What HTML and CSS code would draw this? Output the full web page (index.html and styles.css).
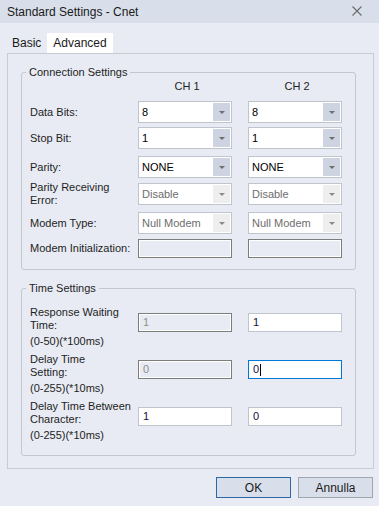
FILE: index.html
```html
<!DOCTYPE html>
<html lang="en">
<head>
  <meta charset="UTF-8" />
  <title>Standard Settings - Cnet</title>
  <link rel="stylesheet" href="styles.css">
</head>
<body>

  <div class="titlebar">
    <span class="title">Standard Settings - Cnet</span>
    <svg class="close" width="10" height="10" viewBox="0 0 10 10">
      <path d="M0.5 0.5 L9.5 9.5 M9.5 0.5 L0.5 9.5" stroke="#6a6a6a" stroke-width="1.1" fill="none"/>
    </svg>
  </div>

  <div class="tabs">
    <div class="tab">Basic</div>
    <div class="tab active">Advanced</div>
  </div>

  <div class="panel">
    <!-- Connection Settings -->
    <div class="group conn">
      <span class="legend">Connection Settings</span>
      <div class="row head">
        <span></span>
        <span class="ch">CH 1</span>
        <span class="ch">CH 2</span>
      </div>
      <div class="row r-data">
        <label>Data Bits:</label>
        <div class="combo"><span>8</span><i class="btn"><b></b></i></div>
        <div class="combo"><span>8</span><i class="btn"><b></b></i></div>
      </div>
      <div class="row r-stop">
        <label>Stop Bit:</label>
        <div class="combo"><span>1</span><i class="btn"><b></b></i></div>
        <div class="combo"><span>1</span><i class="btn"><b></b></i></div>
      </div>
      <div class="row r-parity">
        <label>Parity:</label>
        <div class="combo"><span>NONE</span><i class="btn"><b></b></i></div>
        <div class="combo"><span>NONE</span><i class="btn"><b></b></i></div>
      </div>
      <div class="row r-pre">
        <label>Parity Receiving<br>Error:</label>
        <div class="combo disabled"><span>Disable</span><i class="btn"><b></b></i></div>
        <div class="combo disabled"><span>Disable</span><i class="btn"><b></b></i></div>
      </div>
      <div class="row r-modem">
        <label>Modem Type:</label>
        <div class="combo disabled"><span>Null Modem</span><i class="btn"><b></b></i></div>
        <div class="combo disabled"><span>Null Modem</span><i class="btn"><b></b></i></div>
      </div>
      <div class="row r-init">
        <label>Modem Initialization:</label>
        <div class="textbox disabled"></div>
        <div class="textbox disabled"></div>
      </div>
    </div>

    <!-- Time Settings -->
    <div class="group time">
      <span class="legend">Time Settings</span>
      <div class="tblock">
        <div class="row trow">
          <label>Response Waiting<br>Time:</label>
          <div class="textbox disabled">1</div>
          <div class="textbox">1</div>
        </div>
        <div class="range">(0-50)(*100ms)</div>
      </div>
      <div class="tblock">
        <div class="row trow">
          <label>Delay Time<br>Setting:</label>
          <div class="textbox disabled">0</div>
          <div class="textbox focus">0<span class="caret"></span></div>
        </div>
        <div class="range">(0-255)(*10ms)</div>
      </div>
      <div class="tblock last">
        <div class="row trow">
          <label>Delay Time Between<br>Character:</label>
          <div class="textbox">1</div>
          <div class="textbox">0</div>
        </div>
        <div class="range">(0-255)(*10ms)</div>
      </div>
    </div>
  </div>

  <div class="buttons">
    <button class="ok">OK</button>
    <button>Annulla</button>
  </div>

</body>
</html>
```

FILE: styles.css
```css
* { margin: 0; padding: 0; box-sizing: border-box; font-family: 'Liberation Sans', Arial, sans-serif; }
body { width: 379px; height: 506px; background-color: #e8ebf3; color: #1e1e1e; font-size: 11px; overflow: hidden; }

.titlebar {
  height: 23px;
  background-color: #d9dfea;
  display: flex;
  align-items: center;
  justify-content: space-between;
  padding: 0 17px 0 7px;
}
.title { font-size: 12px; color: #1a1a1a; }
.close { margin-top: -2px; }

.tabs { display: flex; margin-top: 10px; padding-left: 6px; height: 20px; }
.tab { padding: 3px 6px 0 6px; font-size: 12px; color: #1a1a1a; }
.tab.active { background-color: #ffffff; }

.panel {
  margin-left: 7px;
  width: 367px;
  height: 416px;
  border: 1px solid #c7cbd4;
  padding: 18px 0 0 13px;
}

.group {
  position: relative;
  width: 335px;
  border: 1px solid #c3c7d0;
  border-radius: 3px;
  padding: 0 12px 0 8px;
}
.legend {
  position: absolute;
  top: -8px;
  left: 4px;
  padding: 0 3px;
  background-color: #e8ebf3;
  line-height: 14px;
  font-size: 11px;
}
.conn { padding-top: 6px; padding-bottom: 11px; }
.time { margin-top: 18px; padding-top: 17px; padding-bottom: 13px; }

.row {
  display: grid;
  grid-template-columns: 92px 94px 94px;
  column-gap: 16px;
  align-items: center;
}
.row label { line-height: 13px; white-space: nowrap; }
.head { height: 14px; }
.ch { text-align: center; line-height: 14px; padding-left: 4px; }
.r-data { margin-top: 8px; }
.r-stop { margin-top: 4px; }
.r-parity { margin-top: 7px; }
.r-pre { margin-top: 3px; height: 26px; }
.r-modem { margin-top: 5px; }
.r-init { margin-top: 5px; }

.combo {
  height: 22px;
  background-color: #ffffff;
  border: 1px solid #c0c4cc;
  display: flex;
  align-items: center;
  justify-content: space-between;
  padding-left: 3px;
  color: #000000;
}
.combo .btn {
  width: 17px;
  height: 18px;
  margin-right: 1px;
  background-color: #cdd3e1;
  display: flex;
  align-items: center;
  justify-content: center;
}
.combo .btn b {
  width: 0;
  height: 0;
  border-left: 3px solid transparent;
  border-right: 3px solid transparent;
  border-top: 3px solid #6e6e6e;
}
.combo.disabled { color: #6d6d6d; }
.combo.disabled .btn { background-color: #eeeeee; }
.combo.disabled .btn b { border-top-color: #8a8a8a; }

.textbox {
  height: 19px;
  background-color: #ffffff;
  border: 1px solid #c0c4cc;
  padding-left: 4px;
  line-height: 17px;
  color: #10103a;
  display: flex;
  align-items: center;
}
.textbox.disabled {
  background-color: #e8ebf3;
  border-color: #7c7c7c;
  box-shadow: inset 0 0 0 1px #ffffff;
  color: #8e8e8e;
}
.textbox.focus { border-color: #0078d7; }
.caret { display: inline-block; width: 1px; height: 12px; background-color: #000000; margin-left: 1px; }

.tblock { margin-bottom: 5px; }
.tblock.last { margin-top: 3px; margin-bottom: 0; }
.trow { align-items: end; }
.range { line-height: 13px; margin-top: 3px; }

.buttons { display: flex; justify-content: flex-end; gap: 7px; padding-right: 6px; margin-top: 8px; }
.buttons button {
  width: 75px;
  height: 21px;
  background-color: #d9dfea;
  border: 1px solid #a0a5ae;
  font-size: 12px;
  color: #1a1a1a;
}
.buttons .ok { border-color: #2b68a6; }
```
